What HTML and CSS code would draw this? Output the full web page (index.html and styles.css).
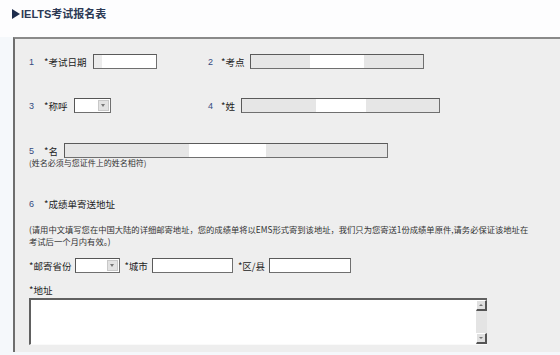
FILE: index.html
```html
<!DOCTYPE html>
<html lang="zh">
<head>
<meta charset="utf-8">
<title>IELTS考试报名表</title>
<link rel="stylesheet" href="styles.css">
</head>
<body>
<div class="title"><span class="tri"></span>IELTS考试报名表</div>
<div class="panel">
  <div class="row row1">
    <div class="group g1">
      <span class="num">1</span><span class="lbl">*考试日期</span><span class="inp date"></span>
    </div>
    <div class="group">
      <span class="num n2">2</span><span class="lbl">*考点</span><span class="inp center-field"></span>
    </div>
  </div>
  <div class="row row2">
    <div class="group g1">
      <span class="num">3</span><span class="lbl">*称呼</span><span class="sel title-sel"><span class="btn"></span></span>
    </div>
    <div class="group">
      <span class="num n2">4</span><span class="lbl">*姓</span><span class="inp surname"></span>
    </div>
  </div>
  <div class="row row3">
    <span class="num">5</span><span class="lbl">*名</span><span class="inp given"></span>
  </div>
  <div class="note name-note">(姓名必须与您证件上的姓名相符)</div>
  <div class="row row6">
    <span class="num">6</span><span class="lbl">*成绩单寄送地址</span>
  </div>
  <div class="note addr-note">(请用中文填写您在中国大陆的详细邮寄地址，您的成绩单将以EMS形式寄到该地址，我们只为您寄送1份成绩单原件,请务必保证该地址在<br>考试后一个月内有效。)</div>
  <div class="row row7">
    <span class="lbl">*邮寄省份</span><span class="sel prov-sel"><span class="btn"></span></span>
    <span class="lbl">*城市</span><span class="inp city"></span>
    <span class="lbl">*区/县</span><span class="inp county"></span>
  </div>
  <div class="addr-lbl">*地址</div>
  <div class="textarea">
    <div class="ta-body"></div>
    <div class="scroll">
      <span class="sbtn up"></span>
      <span class="sbtn down"></span>
    </div>
  </div>
</div>
</body>
</html>
```

FILE: styles.css
```css
html, body {
  margin: 0;
  padding: 0;
}
body {
  width: 560px;
  height: 355px;
  overflow: hidden;
  background: #f5f8fb;
  font-family: "Liberation Sans", "Noto Sans CJK SC", sans-serif;
  color: #222;
}
.title {
  height: 37px;
  background: #fdfdfe;
  box-sizing: border-box;
  padding: 7px 0 0 12px;
  font-size: 11px;
  line-height: 14px;
  font-weight: bold;
  color: #2c3954;
  display: flex;
  align-items: flex-start;
}
.tri {
  width: 0;
  height: 0;
  margin-top: 2px;
  border-top: 5px solid transparent;
  border-bottom: 5px solid transparent;
  border-left: 8px solid #1f2d4d;
  margin-right: 1px;
}
.panel {
  margin-left: 13px;
  height: 315px;
  box-sizing: border-box;
  background: #eeeeee;
  border-top: 2px solid #8a8a8a;
  border-left: 2px solid #6e6e6e;
  padding: 15px 0 0 14px;
  font-family: "Noto Sans CJK SC", "Liberation Sans", sans-serif;
}
.row {
  display: flex;
  align-items: center;
  height: 15px;
}
.group {
  display: flex;
  align-items: center;
}
.g1 {
  width: 179px;
}
.num {
  width: 15px;
  font-family: "Liberation Sans", sans-serif;
  font-size: 9px;
  color: #354a80;
}
.n2 {
  width: 13px;
}
.lbl {
  font-size: 9.5px;
  line-height: 12px;
  margin-right: 6px;
  color: #222;
  white-space: nowrap;
}
.g1 .lbl {
  margin-right: 7px;
}
.inp {
  display: block;
  height: 15px;
  box-sizing: border-box;
  border: 1px solid #6f6f6f;
  border-top-color: #5a5a5a;
  border-left-color: #5a5a5a;
  background: #fff;
}
.date {
  width: 64px;
  background: linear-gradient(to right, #ececec 0 8px, #fff 8px);
}
.center-field {
  width: 174px;
  background: linear-gradient(to right, #e6e6e6 0 59px, #fff 59px 113px, #e6e6e6 113px);
}
.row2 {
  margin-top: 29px;
}
.surname {
  width: 199px;
  background: linear-gradient(to right, #e6e6e6 0 74px, #fff 74px 124px, #e6e6e6 124px);
}
.row3 {
  margin-top: 30px;
}
.given {
  width: 324px;
  background: linear-gradient(to right, #e6e6e6 0 124px, #fff 124px 201px, #e6e6e6 201px);
}
.sel {
  display: flex;
  justify-content: flex-end;
  align-items: center;
  height: 15px;
  box-sizing: border-box;
  border: 1px solid #6f6f6f;
  border-top-color: #555;
  border-left-color: #555;
  background: #fff;
  padding-right: 1px;
}
.title-sel {
  width: 37px;
}
.prov-sel {
  width: 45px;
}
.btn {
  position: relative;
  width: 11px;
  height: 11px;
  box-sizing: border-box;
  background: #e2e2e2;
  border: 1px solid #c8c8c8;
}
.btn::after {
  content: "";
  position: absolute;
  left: 2px;
  top: 3px;
  border-left: 2.5px solid transparent;
  border-right: 2.5px solid transparent;
  border-top: 3px solid #777;
}
.note {
  font-size: 8px;
  line-height: 10px;
  color: #333;
  white-space: nowrap;
}
.row6 {
  margin-top: 30px;
  height: 12px;
}
.addr-note {
  margin-top: 13px;
  line-height: 12px;
  font-size: 8.3px;
}
.row7 {
  margin-top: 11px;
}
.row7 .lbl {
  margin-right: 4px;
}
.prov-sel {
  margin-right: 4px;
}
.city {
  width: 81px;
  margin-right: 5px;
}
.county {
  width: 82px;
}
.addr-lbl {
  margin-top: 11px;
  font-size: 9.5px;
  line-height: 12px;
  height: 12px;
}
.textarea {
  margin-top: 2px;
  width: 458px;
  height: 47px;
  display: flex;
  box-sizing: border-box;
  border-top: 2px solid #606060;
  border-left: 2px solid #606060;
  border-bottom: 1px solid #fafafa;
  background: #fff;
}
.ta-body {
  flex: 1;
}
.scroll {
  width: 11px;
  background: #e4e4e4;
  display: flex;
  flex-direction: column;
  justify-content: space-between;
}
.sbtn {
  position: relative;
  width: 11px;
  height: 11px;
  box-sizing: border-box;
  background: #e0e0e0;
  border-right: 2px solid #555;
  border-bottom: 2px solid #555;
  border-top: 1px solid #fff;
  border-left: 1px solid #fff;
}
.sbtn::after {
  content: "";
  position: absolute;
  left: 2px;
  top: 3px;
  border-left: 2px solid transparent;
  border-right: 2px solid transparent;
}
.up::after {
  border-bottom: 2px solid #777;
}
.down::after {
  border-top: 2px solid #777;
}
```
